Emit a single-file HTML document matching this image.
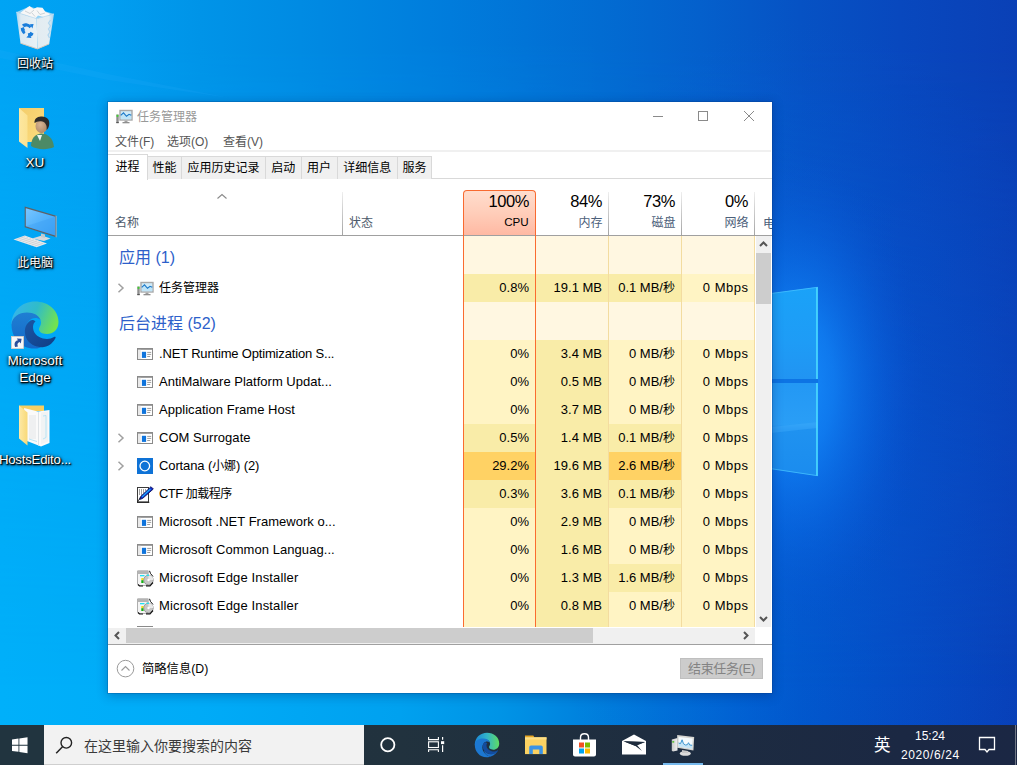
<!DOCTYPE html><html lang="zh-CN"><head><meta charset="utf-8"><title>任务管理器</title><style>
*{margin:0;padding:0;box-sizing:border-box}
html,body{width:1017px;height:765px;overflow:hidden}
body{position:relative;font-family:"Liberation Sans","Noto Sans CJK SC",sans-serif;font-size:12px;color:#000;background:#0a5fd0}
.abs,.abs *{position:absolute}
#desk{position:absolute;left:0;top:0;width:1017px;height:765px;overflow:hidden;
 background:
  linear-gradient(77deg,#00aef8 0px,#00aaf6 90px,#04a0f0 180px,#019cec 400px,#0088e2 520px,#0070d4 650px,#0454c8 800px,#0648c0 950px,#0840b8 1163px);
}
.t{position:absolute;white-space:nowrap;line-height:1}
.ico{position:absolute}
.dl{position:absolute;color:#fff;font-size:12px;text-align:center;white-space:nowrap;line-height:17px;
 text-shadow:1px 1px 1px rgba(0,0,0,.95),1px 1px 2px rgba(0,0,0,.9),0 1px 3px rgba(0,0,0,.8),0 0 4px rgba(0,0,0,.6)}
#win{position:absolute;left:108px;top:102px;width:664px;height:591px;background:#fff;
 box-shadow:0 0 0 1px rgba(0,50,120,.22),0 2px 10px 1px rgba(0,30,90,.30)}
#win .t{color:#000}
.tab{position:absolute;top:54px;height:23px;background:#f0f0f0;border:1px solid #d9d9d9;border-bottom:none;font-size:12px;text-align:center;line-height:22px;white-space:nowrap}
.cell{position:absolute;height:28px}
.num{position:absolute;font-size:13px;line-height:28px;height:28px;text-align:right;white-space:nowrap;color:#000}
.name{position:absolute;left:51px;font-size:13px;line-height:28px;height:28px;white-space:nowrap;color:#000}
.cj{font-size:12px}
.grp{position:absolute;left:11px;font-size:16px;color:#2d5fca;white-space:nowrap;line-height:38px;height:38px}
#tb{position:absolute;left:0;top:725px;width:1017px;height:40px;background:linear-gradient(90deg,#22343f 0px,#21323e 400px,#1e2d40 650px,#1b2843 900px,#1b2744 1017px)}
</style></head><body>
<div id="desk">

<svg class="ico" style="left:0;top:0" width="1017" height="765" viewBox="0 0 1017 765">
 <defs>
  <linearGradient id="gA" x1="0" y1="0" x2="1017" y2="0" gradientUnits="userSpaceOnUse"><stop offset="0.0000" stop-color="#00a4f4"/><stop offset="0.0983" stop-color="#019ff1"/><stop offset="0.1967" stop-color="#0094e8"/><stop offset="0.2950" stop-color="#008be3"/><stop offset="0.4425" stop-color="#007cdc"/><stop offset="0.5900" stop-color="#026cd2"/><stop offset="0.6883" stop-color="#0460cc"/><stop offset="0.7866" stop-color="#0652c4"/><stop offset="0.8850" stop-color="#0848be"/><stop offset="1.0000" stop-color="#0a40b6"/></linearGradient>
  <linearGradient id="gB" x1="0" y1="0" x2="1017" y2="0" gradientUnits="userSpaceOnUse"><stop offset="0.0000" stop-color="#00b0fa"/><stop offset="0.1967" stop-color="#00abf7"/><stop offset="0.3933" stop-color="#00a1ef"/><stop offset="0.4916" stop-color="#0094e6"/><stop offset="0.5900" stop-color="#007edc"/><stop offset="0.6883" stop-color="#0069d4"/><stop offset="0.7375" stop-color="#005fd0"/><stop offset="0.7866" stop-color="#0056ca"/><stop offset="0.8850" stop-color="#044ac2"/><stop offset="1.0000" stop-color="#0840b8"/></linearGradient>
  <linearGradient id="gM" x1="0" y1="0" x2="0" y2="765" gradientUnits="userSpaceOnUse"><stop offset="0" stop-color="#fff"/><stop offset=".06" stop-color="#fff"/><stop offset=".9" stop-color="#000"/><stop offset="1" stop-color="#000"/></linearGradient>
  <mask id="mk" maskUnits="userSpaceOnUse" x="0" y="0" width="1017" height="765"><rect width="1017" height="765" fill="url(#gM)"/></mask>
  <radialGradient id="glow" cx="795" cy="385" r="1" gradientUnits="userSpaceOnUse" gradientTransform="translate(795 385) scale(130 240) translate(-795 -385)">
   <stop offset="0" stop-color="#1890ff" stop-opacity=".95"/>
   <stop offset=".3" stop-color="#1284f8" stop-opacity=".75"/>
   <stop offset=".6" stop-color="#0c70ec" stop-opacity=".4"/>
   <stop offset="1" stop-color="#0850d0" stop-opacity="0"/>
  </radialGradient>
  <radialGradient id="glow2" cx="800" cy="440" r="1" gradientUnits="userSpaceOnUse" gradientTransform="translate(800 440) scale(300 420) translate(-800 -440)">
   <stop offset="0" stop-color="#0a64e2" stop-opacity=".35"/>
   <stop offset="1" stop-color="#0a64e2" stop-opacity="0"/>
  </radialGradient>
  <linearGradient id="p1" x1="0" y1="0" x2="0" y2="1">
   <stop offset="0" stop-color="#1aa2f8"/><stop offset=".6" stop-color="#1e9cf6"/><stop offset="1" stop-color="#2194f2"/>
  </linearGradient>
  <linearGradient id="p2" x1="0" y1="0" x2="0" y2="1">
   <stop offset="0" stop-color="#2398f4"/><stop offset=".45" stop-color="#2a9ef6"/><stop offset=".5" stop-color="#1f92f0"/><stop offset="1" stop-color="#1b8cee"/>
  </linearGradient>
 </defs>
 <rect width="1017" height="765" fill="url(#gB)"/>
 <rect width="1017" height="765" fill="url(#gA)" mask="url(#mk)"/>
 <rect x="400" y="0" width="617" height="765" fill="url(#glow2)"/>
 <rect x="600" y="0" width="417" height="765" fill="url(#glow)"/>
 <rect x="700" y="379" width="118" height="4" fill="#0d74e4"/>
 <path d="M700 303L817.500 287V379H700Z" fill="url(#p1)"/>
 <path d="M700 383H817.500V476L700 458Z" fill="url(#p2)"/>
 <path d="M700 435L817 422V428L700 441Z" fill="#3aa8fa" opacity=".5"/>
 <path d="M817 287V379M817 383V476" stroke="#4cdcff" stroke-width="1.600" fill="none"/>
 <path d="M700 303L817.500 287.300" stroke="#45c0ff" stroke-width="1" fill="none" opacity=".8"/>
 <path d="M700 458L817.500 475.700" stroke="#45c0ff" stroke-width="1" fill="none" opacity=".8"/>
 <path d="M0 50L108 74L230 98L108 80L0 58Z" fill="#38b4ff" opacity=".13"/>
</svg>


<!-- recycle bin -->
<svg class="ico" style="left:12px;top:3px" width="46" height="50" viewBox="0 0 46 50">
 <defs>
  <linearGradient id="rbL" x1="0" y1="0" x2="1" y2="0"><stop offset="0" stop-color="#a9d6f3"/><stop offset=".22" stop-color="#e6edf2"/><stop offset="1" stop-color="#f3f5f6"/></linearGradient>
  <linearGradient id="rbR" x1="0" y1="0" x2="1" y2="0"><stop offset="0" stop-color="#eceff1"/><stop offset=".7" stop-color="#eef1f3"/><stop offset="1" stop-color="#a6d3f1"/></linearGradient>
 </defs>
 <path d="M4.200 9.200L17.500 3.500L42 11L24.700 15.700Z" fill="#cfe6f7" opacity=".7"/>
 <path d="M7.500 10.500L12 7L17.500 3L21.500 6L25 4.300L30.500 4.800L33.500 9L38.500 11L33 14.500L26 12.500L23 16L15 12.500Z" fill="#f7f7f7"/>
 <path d="M13 8l5 2.500 4-3.500M25 7.500l3 4 5-1.500M20 10l3 3.500" stroke="#cdd3d8" stroke-width="1" fill="none"/>
 <path d="M4.200 9.200L24.700 15.700L25.400 45.900L8.500 40.200Z" fill="url(#rbL)" opacity=".96"/>
 <path d="M24.700 15.700L42 11L37.200 40.900L25.400 45.900Z" fill="url(#rbR)" opacity=".96"/>
 <path d="M38.500 17l-2 3 2 3-2 3 1.500 3-2 3 1.500 3" stroke="#a9d3ee" stroke-width="1.200" fill="none" opacity=".9"/>
 <path d="M4.200 9.200L24.700 15.700L42 11" stroke="#c2dcee" stroke-width=".9" fill="none"/>
 <path d="M8.500 40.200L25.400 45.900L37.200 40.900" stroke="#d8c9bd" stroke-width="1" fill="none"/>
 <g transform="translate(15.300 26.900) skewY(16)" fill="none" stroke="#1b7edb" stroke-width="3.200">
  <path d="M-4.100 -2.600A4.900 4.900 0 0 1 3.300 -3.600"/>
  <path d="M4.700 1.300A4.900 4.900 0 0 1 0.800 4.800"/>
  <path d="M-2.600 4.100A4.900 4.900 0 0 1 -4.900 -0.300"/>
 </g>
 <path d="M17.800 21.300l2.600 4.200 1.200-4.500zM19.500 35l-5.200-.5 3.200-3.300zM9 27.500l2.200-4.300 2 4.300z" fill="#1b7edb"/>
</svg>
<div class="dl" style="left:0;top:56px;width:70px;font-size:12px">回收站</div>

<!-- user folder -->
<svg class="ico" style="left:17px;top:106px" width="40" height="46" viewBox="0 0 40 46">
 <defs>
  <linearGradient id="uf1" x1="0" y1="0" x2="1" y2="1"><stop offset="0" stop-color="#f3cd6b"/><stop offset="1" stop-color="#fcdc7e"/></linearGradient>
  <linearGradient id="uf2" x1="0" y1="0" x2="1" y2="0"><stop offset="0" stop-color="#fde7a0"/><stop offset="1" stop-color="#fbe291"/></linearGradient>
  <radialGradient id="face" cx=".4" cy=".4" r=".7"><stop offset="0" stop-color="#d8b493"/><stop offset="1" stop-color="#a98565"/></radialGradient>
 </defs>
 <path d="M2 2H27V36H10Z" fill="url(#uf1)"/>
 <path d="M2 2L10.5 9.5V42L2 35.5Z" fill="url(#uf2)"/>
 <path d="M14 40C14 33 18 28 24 27.5C31 27.5 36 32 37 41C31 44 20 44 14 40Z" fill="#4c8a66"/>
 <path d="M20 29l3 6 2-6z" fill="#eef3f0"/>
 <ellipse cx="24.5" cy="20" rx="6" ry="7.2" fill="url(#face)"/>
 <path d="M17.5 17C17 11.5 22 10.5 25 10.5C30 10.5 33.5 14 32 20C31 23 29.5 24 29.5 24C30.5 19 28 15.5 24 15.2C21 15 19 16 17.5 17Z" fill="#2d2b2a"/>
</svg>
<div class="dl" style="left:0;top:154px;width:70px;font-size:13.5px">XU</div>

<!-- this pc -->
<svg class="ico" style="left:12px;top:205px" width="46" height="44" viewBox="0 0 46 44">
 <defs>
  <linearGradient id="pc1" x1="0" y1="0" x2="1" y2="1"><stop offset="0" stop-color="#7ac6ff"/><stop offset=".5" stop-color="#52b2fc"/><stop offset="1" stop-color="#3aa2f6"/></linearGradient>
 </defs>
 <path d="M20 33.500L30 30.500L38.500 33.500L32 36Z" fill="#d4d9dd"/>
 <path d="M29 28.500l4 1v3.500l-4-1z" fill="#c3c9ce"/>
 <path d="M12.700 1.500L44.300 10.800V32.300L12.700 22.300Z" fill="#5e6268"/><path d="M43.600 10.600L44.600 10.900V32.400L43.600 32.100Z" fill="#b4b8bc"/>
 <path d="M13.800 3.200L43.200 11.800V30.500L13.800 21.300Z" fill="url(#pc1)"/>
 <path d="M13.800 21.300L43.200 11.800V30.500Z" fill="#3a9cf2" opacity=".35"/>
 <path d="M1.500 34.400L12.800 30.500L35 38.400L24.600 42.300Z" fill="#e6e8ea"/>
 <path d="M4.500 34.600l8.500-3M7.500 35.700l8.500-3M10.500 36.800l8.500-3M13.500 37.900l8.500-3M16.500 39l8.500-3M19.500 40.100l8.500-3M22.500 41.200l8.500-3" stroke="#c4c8cc" stroke-width=".7" fill="none"/>
</svg>
<div class="dl" style="left:0;top:254.500px;width:70px;font-size:12px">此电脑</div>

<!-- edge -->
<svg class="ico" style="left:10px;top:300px" width="50" height="50" viewBox="0 0 50 50">
 <defs>
  <linearGradient id="e1" x1="0" y1="0.2" x2="1" y2="0.5"><stop offset="0" stop-color="#36b4ee"/><stop offset=".5" stop-color="#30bcc8"/><stop offset="1" stop-color="#72e250"/></linearGradient>
  <linearGradient id="e2" x1="0" y1="0" x2="0" y2="1"><stop offset="0" stop-color="#1f7fd3"/><stop offset="1" stop-color="#1468c8"/></linearGradient>
  <linearGradient id="e3" x1="0" y1="0" x2="1" y2="1"><stop offset="0" stop-color="#1a56a6"/><stop offset="1" stop-color="#103e86"/></linearGradient>
 </defs>
 <path d="M1.500 24.500C1.500 11 12 1.500 25 1.500C38 1.500 48.500 10 48.500 22C48.500 30 43 34 37 34C31 34 28.500 31 29 28.500C30 26 31 25 31 22.500C31 18 27 14.500 21.500 14.500C12 14.500 5 20 1.500 24.500Z" fill="url(#e1)"/>
 <path d="M1.500 24.500C2 17 9 12.500 17 12.500C24 12.500 29 15.500 30.500 20C27 17 22 17.500 19 21C15 25.500 15 33 19 39C22 43.500 27 46.500 31 47.500C28 48.500 26 48.500 24 48.500C11 48.500 1.500 38 1.500 24.500Z" fill="url(#e2)"/>
 <path d="M20.500 20.500C15 24 13.500 31 16 37.500C19 44.500 27 48 34 47C40 46 44 41.500 45.500 38C46 37 45 36.300 44 37C41 39 37 39.500 33 38.500C27 37 23 32.500 23 27C23 24 24.500 22 25.500 21.500C23.500 19.500 21.500 19.800 20.500 20.500Z" fill="url(#e3)"/>
 <rect x="1.500" y="36.500" width="12" height="12" fill="#f7f7f7" stroke="#d9cfc8" stroke-width=".8"/>
 <path d="M5.200 47C3.800 43.500 5 40.800 8 40.300L6.800 38.600L11.600 38.700L10.800 43.400L9.600 42C7.600 42.500 6.800 44.500 8 46.500Z" fill="#2a4f9c"/>
</svg>
<div class="dl" style="left:0;top:352px;width:70px;font-size:13.5px">Microsoft<br>Edge</div>

<!-- hosts editor folder -->
<svg class="ico" style="left:17px;top:403px" width="36" height="46" viewBox="0 0 36 46">
 <defs>
  <linearGradient id="hf2" x1="0" y1="0" x2="1" y2="0"><stop offset="0" stop-color="#fde9a6"/><stop offset="1" stop-color="#f8d978"/></linearGradient>
 </defs>
 <path d="M2 2.500H27V8H2Z" fill="#f6cf62"/>
 <path d="M7 5L21 8.500L32.500 7V40L24 43.500L10 38Z" fill="#fafafa"/>
 <path d="M21.500 9V42.500" stroke="#dfe3e6" stroke-width="1"/>
 <path d="M24 9.500L31 8.500V38.500L24 41.500Z" fill="#f1f3f4"/>
 <path d="M12 12h7v24h-7z" fill="#eceeef" opacity=".8"/>
 <path d="M26 13l3-.5v22l-3 1.500" stroke="#a9dff5" stroke-width=".8" fill="none"/>
 <path d="M12 36l8 2.500" stroke="#a9dff5" stroke-width=".8" fill="none"/>
 <path d="M2 2.500L10.500 9.500V42.500L2 35.500Z" fill="url(#hf2)"/>
</svg>
<div class="dl" style="left:-20px;top:451px;width:110px;font-size:13.2px;letter-spacing:-.2px">HostsEdito...</div>

</div>
<div id="win">

<svg class="ico" style="left:8px;top:5.8px" width="17" height="16" viewBox="0 0 17 16">
 <rect x="0.300" y="6.500" width="2.400" height="8.500" fill="#8e8e8e"/><rect x="0.600" y="6.800" width="1.800" height="2" fill="#3fd22e"/><rect x="0.300" y="14" width="2.400" height="1.200" fill="#555"/>
 <rect x="4" y="2.500" width="12" height="9.500" fill="#cfeaf8" stroke="#a8a8a8" stroke-width="1.400"/>
 <path d="M4.700 9.500V7.500L7.500 4.800L10.500 8.300L13 6.300L15.300 7.500V11.300H4.700Z" fill="#bfe4f7"/>
 <polyline points="4.700,7.300 7.500,4.800 10.500,8.300 13,6.300 15.300,7.300" fill="none" stroke="#1b79c9" stroke-width="1.100"/>
 <rect x="8.500" y="12.700" width="3" height="1.500" fill="#a0a0a0"/><rect x="6.500" y="14" width="7" height="1.300" fill="#8f8f8f"/>
</svg>
<div class="t" style="left:29px;top:9px;font-size:12px;color:#999">任务管理器</div>
<svg class="ico" style="left:540px;top:4px" width="120" height="22" viewBox="0 0 120 22">
 <path d="M5 10.5h10" stroke="#8a8a8a" stroke-width="1" fill="none"/>
 <rect x="50.5" y="5.5" width="9" height="9" stroke="#8a8a8a" stroke-width="1" fill="none"/>
 <path d="M96 5l10 10M106 5l-10 10" stroke="#8a8a8a" stroke-width="1" fill="none"/>
</svg>

<div class="t" style="left:7px;top:34px;font-size:12px;color:#555">文件(F)</div>
<div class="t" style="left:59px;top:34px;font-size:12px;color:#555">选项(O)</div>
<div class="t" style="left:115px;top:34px;font-size:12px;color:#555">查看(V)</div>
<div style="position:absolute;left:0;top:48px;width:663px;height:2px;background:#f0f0f0"></div>
<div style="position:absolute;left:0;top:76px;width:664px;height:1px;background:#d9d9d9"></div>
<div class="tab" style="left:39px;width:35px">性能</div>
<div class="tab" style="left:73px;width:85px">应用历史记录</div>
<div class="tab" style="left:157px;width:36.5px">启动</div>
<div class="tab" style="left:192.5px;width:37.0px">用户</div>
<div class="tab" style="left:228.5px;width:61.5px">详细信息</div>
<div class="tab" style="left:289px;width:35px">服务</div>
<div class="tab" style="left:0;top:52px;width:40px;height:26px;background:#fff;line-height:24px;border-left:none">进程</div>
<div style="position:absolute;left:234px;top:90px;width:1px;height:43px;background:linear-gradient(#efefef,#d0d0d0 40%,#a4a4a4)"></div>
<div style="position:absolute;left:500px;top:90px;width:1px;height:43px;background:linear-gradient(#efefef,#d0d0d0 40%,#a4a4a4)"></div>
<div style="position:absolute;left:573px;top:90px;width:1px;height:43px;background:linear-gradient(#efefef,#d0d0d0 40%,#a4a4a4)"></div>
<div style="position:absolute;left:646px;top:90px;width:1px;height:43px;background:linear-gradient(#efefef,#d0d0d0 40%,#a4a4a4)"></div>
<div style="position:absolute;left:355px;top:88px;width:73px;height:46px;border:1px solid #f86a30;border-bottom:none;border-radius:4px 4px 0 0;background:linear-gradient(180deg,#ffddcd 0%,#ffcdb9 50%,#ffb8a2 100%)"></div>
<div style="position:absolute;left:0;top:133px;width:664px;height:1px;background:#a0a0a0"></div>
<div style="position:absolute;left:355px;top:133px;width:1px;height:1px;background:#fa6c30"></div><div style="position:absolute;left:427px;top:133px;width:1px;height:1px;background:#fa6c30"></div>
<svg class="ico" style="left:108px;top:91px" width="12" height="7" viewBox="0 0 12 7"><path d="M1.5 5.5L6 1.5L10.5 5.5" fill="none" stroke="#8a8a8a" stroke-width="1.1"/></svg>
<div class="t" style="left:7px;top:115px;font-size:12px;color:#4c5a6b">名称</div>
<div class="t" style="left:241px;top:115px;font-size:12px;color:#4c5a6b">状态</div>
<div class="t" style="right:243px;top:91px;font-size:16.5px;letter-spacing:-0.4px;color:#000">100%</div>
<div class="t" style="right:243.3px;top:114.4px;font-size:11.6px;color:#000">CPU</div>
<div class="t" style="right:170px;top:91px;font-size:16.5px;letter-spacing:-0.4px;color:#000">84%</div>
<div class="t" style="right:169.5px;top:115px;font-size:12px;color:#4c607a">内存</div>
<div class="t" style="right:97px;top:91px;font-size:16.5px;letter-spacing:-0.4px;color:#000">73%</div>
<div class="t" style="right:96.5px;top:115px;font-size:12px;color:#4c607a">磁盘</div>
<div class="t" style="right:24px;top:91px;font-size:16.5px;letter-spacing:-0.4px;color:#000">0%</div>
<div class="t" style="right:23.5px;top:115px;font-size:12px;color:#4c607a">网络</div>
<div style="position:absolute;left:655px;top:110px;width:9px;height:20px;overflow:hidden"><div class="t" style="left:0;top:5.5px;font-size:12px;color:#4c607a">电</div></div>
<div style="position:absolute;left:0;top:134px;width:647px;height:391px;overflow:hidden"><div style="position:absolute;left:0;top:-134px;width:664px;height:600px">
<div style="position:absolute;left:355px;top:134px;width:292px;height:38px;background:#fff7e1"></div>
<div class="grp" style="top:137px">应用 (1)</div>
<div class="cell" style="left:355px;top:172px;width:73px;background:#f9eca8"></div>
<div class="num" style="right:243px;top:172px">0.8%</div>
<div class="cell" style="left:428px;top:172px;width:73px;background:#f9eca8"></div>
<div class="num" style="right:170px;top:172px">19.1 MB</div>
<div class="cell" style="left:501px;top:172px;width:73px;background:#f9eca8"></div>
<div class="num" style="right:97px;top:172px">0.1 MB/<span class="cj">秒</span></div>
<div class="cell" style="left:574px;top:172px;width:73px;background:#fff4c4"></div>
<div class="num" style="right:24px;top:172px;letter-spacing:.5px;margin-right:-.5px">0 Mbps</div>
<svg class="ico" style="left:9px;top:181px" width="8" height="10" viewBox="0 0 8 10"><path d="M1.5 0.8L6 5L1.5 9.2" fill="none" stroke="#a0a0a0" stroke-width="1.5"/></svg>
<svg class="ico" style="left:29px;top:178px" width="17" height="16" viewBox="0 0 17 16">
 <rect x="0.300" y="6.500" width="2.400" height="8.500" fill="#8e8e8e"/><rect x="0.600" y="6.800" width="1.800" height="2" fill="#3fd22e"/><rect x="0.300" y="14" width="2.400" height="1.200" fill="#555"/>
 <rect x="4" y="2.500" width="12" height="9.500" fill="#cfeaf8" stroke="#a8a8a8" stroke-width="1.400"/>
 <path d="M4.700 9.500V7.500L7.500 4.800L10.500 8.300L13 6.300L15.300 7.500V11.300H4.700Z" fill="#bfe4f7"/>
 <polyline points="4.700,7.300 7.500,4.800 10.500,8.300 13,6.300 15.300,7.300" fill="none" stroke="#1b79c9" stroke-width="1.100"/>
 <rect x="8.500" y="12.700" width="3" height="1.500" fill="#a0a0a0"/><rect x="6.500" y="14" width="7" height="1.300" fill="#8f8f8f"/>
</svg>

<div class="name" style="top:172px;letter-spacing:-0.00px"><span class="cj">任务管理器</span></div>
<div style="position:absolute;left:355px;top:200px;width:292px;height:38px;background:#fff7e1"></div>
<div class="grp" style="top:203px">后台进程 (52)</div>
<div class="cell" style="left:355px;top:238px;width:73px;background:#fff4c4"></div>
<div class="num" style="right:243px;top:238px">0%</div>
<div class="cell" style="left:428px;top:238px;width:73px;background:#f9eca8"></div>
<div class="num" style="right:170px;top:238px">3.4 MB</div>
<div class="cell" style="left:501px;top:238px;width:73px;background:#fff4c4"></div>
<div class="num" style="right:97px;top:238px">0 MB/<span class="cj">秒</span></div>
<div class="cell" style="left:574px;top:238px;width:73px;background:#fff4c4"></div>
<div class="num" style="right:24px;top:238px;letter-spacing:.5px;margin-right:-.5px">0 Mbps</div>
<svg class="ico" style="left:29px;top:244px" width="16" height="16" viewBox="0 0 16 16"><rect x="0.500" y="2.500" width="15" height="11" fill="#fff" stroke="#8a8a8a"/><rect x="0" y="2" width="16" height="1.800" fill="#8a8a8a"/><rect x="1" y="3.800" width="2.700" height="9.200" fill="#e9e9e9"/><rect x="4.900" y="5.800" width="4.200" height="6.100" fill="#0f74dc"/><path d="M10.200 6.400h4M10.200 8.400h4M10.200 10.500h3" stroke="#9c9c9c" stroke-width="1"/></svg>
<div class="name" style="top:238px;letter-spacing:-0.17px">.NET Runtime Optimization S...</div>
<div class="cell" style="left:355px;top:266px;width:73px;background:#fff4c4"></div>
<div class="num" style="right:243px;top:266px">0%</div>
<div class="cell" style="left:428px;top:266px;width:73px;background:#f9eca8"></div>
<div class="num" style="right:170px;top:266px">0.5 MB</div>
<div class="cell" style="left:501px;top:266px;width:73px;background:#fff4c4"></div>
<div class="num" style="right:97px;top:266px">0 MB/<span class="cj">秒</span></div>
<div class="cell" style="left:574px;top:266px;width:73px;background:#fff4c4"></div>
<div class="num" style="right:24px;top:266px;letter-spacing:.5px;margin-right:-.5px">0 Mbps</div>
<svg class="ico" style="left:29px;top:272px" width="16" height="16" viewBox="0 0 16 16"><rect x="0.500" y="2.500" width="15" height="11" fill="#fff" stroke="#8a8a8a"/><rect x="0" y="2" width="16" height="1.800" fill="#8a8a8a"/><rect x="1" y="3.800" width="2.700" height="9.200" fill="#e9e9e9"/><rect x="4.900" y="5.800" width="4.200" height="6.100" fill="#0f74dc"/><path d="M10.200 6.400h4M10.200 8.400h4M10.200 10.500h3" stroke="#9c9c9c" stroke-width="1"/></svg>
<div class="name" style="top:266px;letter-spacing:0.01px">AntiMalware Platform Updat...</div>
<div class="cell" style="left:355px;top:294px;width:73px;background:#fff4c4"></div>
<div class="num" style="right:243px;top:294px">0%</div>
<div class="cell" style="left:428px;top:294px;width:73px;background:#f9eca8"></div>
<div class="num" style="right:170px;top:294px">3.7 MB</div>
<div class="cell" style="left:501px;top:294px;width:73px;background:#fff4c4"></div>
<div class="num" style="right:97px;top:294px">0 MB/<span class="cj">秒</span></div>
<div class="cell" style="left:574px;top:294px;width:73px;background:#fff4c4"></div>
<div class="num" style="right:24px;top:294px;letter-spacing:.5px;margin-right:-.5px">0 Mbps</div>
<svg class="ico" style="left:29px;top:300px" width="16" height="16" viewBox="0 0 16 16"><rect x="0.500" y="2.500" width="15" height="11" fill="#fff" stroke="#8a8a8a"/><rect x="0" y="2" width="16" height="1.800" fill="#8a8a8a"/><rect x="1" y="3.800" width="2.700" height="9.200" fill="#e9e9e9"/><rect x="4.900" y="5.800" width="4.200" height="6.100" fill="#0f74dc"/><path d="M10.200 6.400h4M10.200 8.400h4M10.200 10.500h3" stroke="#9c9c9c" stroke-width="1"/></svg>
<div class="name" style="top:294px;letter-spacing:0.04px">Application Frame Host</div>
<div class="cell" style="left:355px;top:322px;width:73px;background:#f9eca8"></div>
<div class="num" style="right:243px;top:322px">0.5%</div>
<div class="cell" style="left:428px;top:322px;width:73px;background:#f9eca8"></div>
<div class="num" style="right:170px;top:322px">1.4 MB</div>
<div class="cell" style="left:501px;top:322px;width:73px;background:#f9eca8"></div>
<div class="num" style="right:97px;top:322px">0.1 MB/<span class="cj">秒</span></div>
<div class="cell" style="left:574px;top:322px;width:73px;background:#fff4c4"></div>
<div class="num" style="right:24px;top:322px;letter-spacing:.5px;margin-right:-.5px">0 Mbps</div>
<svg class="ico" style="left:9px;top:331px" width="8" height="10" viewBox="0 0 8 10"><path d="M1.5 0.8L6 5L1.5 9.2" fill="none" stroke="#a0a0a0" stroke-width="1.5"/></svg>
<svg class="ico" style="left:29px;top:328px" width="16" height="16" viewBox="0 0 16 16"><rect x="0.500" y="2.500" width="15" height="11" fill="#fff" stroke="#8a8a8a"/><rect x="0" y="2" width="16" height="1.800" fill="#8a8a8a"/><rect x="1" y="3.800" width="2.700" height="9.200" fill="#e9e9e9"/><rect x="4.900" y="5.800" width="4.200" height="6.100" fill="#0f74dc"/><path d="M10.200 6.400h4M10.200 8.400h4M10.200 10.500h3" stroke="#9c9c9c" stroke-width="1"/></svg>
<div class="name" style="top:322px;letter-spacing:0.04px">COM Surrogate</div>
<div class="cell" style="left:355px;top:350px;width:73px;background:#ffd264"></div>
<div class="num" style="right:243px;top:350px">29.2%</div>
<div class="cell" style="left:428px;top:350px;width:73px;background:#f9eca8"></div>
<div class="num" style="right:170px;top:350px">19.6 MB</div>
<div class="cell" style="left:501px;top:350px;width:73px;background:#ffd264"></div>
<div class="num" style="right:97px;top:350px">2.6 MB/<span class="cj">秒</span></div>
<div class="cell" style="left:574px;top:350px;width:73px;background:#fff4c4"></div>
<div class="num" style="right:24px;top:350px;letter-spacing:.5px;margin-right:-.5px">0 Mbps</div>
<svg class="ico" style="left:9px;top:359px" width="8" height="10" viewBox="0 0 8 10"><path d="M1.5 0.8L6 5L1.5 9.2" fill="none" stroke="#a0a0a0" stroke-width="1.5"/></svg>
<svg class="ico" style="left:29px;top:356px" width="16" height="16" viewBox="0 0 16 16"><rect width="16" height="16" fill="#0e72d6"/><circle cx="7.800" cy="8" r="4.800" fill="none" stroke="#fff" stroke-width="1.300"/></svg>
<div class="name" style="top:350px;letter-spacing:-0.11px">Cortana (<span class="cj">小娜</span>) (2)</div>
<div class="cell" style="left:355px;top:378px;width:73px;background:#f9eca8"></div>
<div class="num" style="right:243px;top:378px">0.3%</div>
<div class="cell" style="left:428px;top:378px;width:73px;background:#f9eca8"></div>
<div class="num" style="right:170px;top:378px">3.6 MB</div>
<div class="cell" style="left:501px;top:378px;width:73px;background:#f9eca8"></div>
<div class="num" style="right:97px;top:378px">0.1 MB/<span class="cj">秒</span></div>
<div class="cell" style="left:574px;top:378px;width:73px;background:#fff4c4"></div>
<div class="num" style="right:24px;top:378px;letter-spacing:.5px;margin-right:-.5px">0 Mbps</div>
<svg class="ico" style="left:29px;top:384px" width="17" height="17" viewBox="0 0 17 17"><rect x="0.500" y="1.500" width="11" height="14.500" fill="#fff" stroke="#3a3a3a"/><path d="M0 16.300H12.300" stroke="#111" stroke-width="1"/><path d="M2 4h7M2 6h6M2 8h4" stroke="#444" stroke-width="1" stroke-dasharray="1 1"/><path d="M14 0.700L16.300 3L5.500 12.500L2.500 13.500L3.700 10.500Z" fill="#1328c8" stroke="#0a1260" stroke-width="0.900"/><path d="M13.500 3L5 10.800" stroke="#19b8ff" stroke-width="1.100"/><path d="M0.500 16L3.700 11" stroke="#222" stroke-width=".8"/></svg>
<div class="name" style="top:378px;letter-spacing:-0.53px">CTF <span class="cj">加载程序</span></div>
<div class="cell" style="left:355px;top:406px;width:73px;background:#fff4c4"></div>
<div class="num" style="right:243px;top:406px">0%</div>
<div class="cell" style="left:428px;top:406px;width:73px;background:#f9eca8"></div>
<div class="num" style="right:170px;top:406px">2.9 MB</div>
<div class="cell" style="left:501px;top:406px;width:73px;background:#fff4c4"></div>
<div class="num" style="right:97px;top:406px">0 MB/<span class="cj">秒</span></div>
<div class="cell" style="left:574px;top:406px;width:73px;background:#fff4c4"></div>
<div class="num" style="right:24px;top:406px;letter-spacing:.5px;margin-right:-.5px">0 Mbps</div>
<svg class="ico" style="left:29px;top:412px" width="16" height="16" viewBox="0 0 16 16"><rect x="0.500" y="2.500" width="15" height="11" fill="#fff" stroke="#8a8a8a"/><rect x="0" y="2" width="16" height="1.800" fill="#8a8a8a"/><rect x="1" y="3.800" width="2.700" height="9.200" fill="#e9e9e9"/><rect x="4.900" y="5.800" width="4.200" height="6.100" fill="#0f74dc"/><path d="M10.200 6.400h4M10.200 8.400h4M10.200 10.500h3" stroke="#9c9c9c" stroke-width="1"/></svg>
<div class="name" style="top:406px;letter-spacing:0.02px">Microsoft .NET Framework o...</div>
<div class="cell" style="left:355px;top:434px;width:73px;background:#fff4c4"></div>
<div class="num" style="right:243px;top:434px">0%</div>
<div class="cell" style="left:428px;top:434px;width:73px;background:#f9eca8"></div>
<div class="num" style="right:170px;top:434px">1.6 MB</div>
<div class="cell" style="left:501px;top:434px;width:73px;background:#fff4c4"></div>
<div class="num" style="right:97px;top:434px">0 MB/<span class="cj">秒</span></div>
<div class="cell" style="left:574px;top:434px;width:73px;background:#fff4c4"></div>
<div class="num" style="right:24px;top:434px;letter-spacing:.5px;margin-right:-.5px">0 Mbps</div>
<svg class="ico" style="left:29px;top:440px" width="16" height="16" viewBox="0 0 16 16"><rect x="0.500" y="2.500" width="15" height="11" fill="#fff" stroke="#8a8a8a"/><rect x="0" y="2" width="16" height="1.800" fill="#8a8a8a"/><rect x="1" y="3.800" width="2.700" height="9.200" fill="#e9e9e9"/><rect x="4.900" y="5.800" width="4.200" height="6.100" fill="#0f74dc"/><path d="M10.200 6.400h4M10.200 8.400h4M10.200 10.500h3" stroke="#9c9c9c" stroke-width="1"/></svg>
<div class="name" style="top:434px;letter-spacing:0.06px">Microsoft Common Languag...</div>
<div class="cell" style="left:355px;top:462px;width:73px;background:#fff4c4"></div>
<div class="num" style="right:243px;top:462px">0%</div>
<div class="cell" style="left:428px;top:462px;width:73px;background:#f9eca8"></div>
<div class="num" style="right:170px;top:462px">1.3 MB</div>
<div class="cell" style="left:501px;top:462px;width:73px;background:#f9eca8"></div>
<div class="num" style="right:97px;top:462px">1.6 MB/<span class="cj">秒</span></div>
<div class="cell" style="left:574px;top:462px;width:73px;background:#fff4c4"></div>
<div class="num" style="right:24px;top:462px;letter-spacing:.5px;margin-right:-.5px">0 Mbps</div>
<svg class="ico" style="left:29px;top:468px" width="17" height="17" viewBox="0 0 17 17"><path d="M0.500 1H11V14.500L8 15.500H2L0.500 14Z" fill="#f4f4f4" stroke="#9a9a9a" stroke-width=".8"/><rect x="0.500" y="0.500" width="11" height="3.500" fill="#b4b4b4"/><rect x="3" y="5" width="4.500" height="1.300" fill="#22e0f0"/><rect x="4.300" y="8" width="2.300" height="2.200" fill="#f4e018"/><rect x="4.300" y="10.200" width="2.300" height="2.800" fill="#12b012"/><circle cx="11.500" cy="10" r="4.800" fill="#c6c6c6" stroke="#777" stroke-width=".6"/><path d="M11.500 5.200A4.800 4.800 0 0 1 16.300 10H11.500Z" fill="#e9e9e9"/><rect x="9.500" y="4.600" width="2.500" height="1.300" fill="#22e0f0"/><circle cx="11.500" cy="10" r="1.200" fill="#fff"/><path d="M1 14.500L2.500 16H6M9 15.800H13L16 12.500" stroke="#111" stroke-width="1.200" fill="none"/><path d="M12.500 0.800L13.500 3.500L16 6.500" stroke="#111" stroke-width="1" fill="none"/></svg>
<div class="name" style="top:462px;letter-spacing:0.15px">Microsoft Edge Installer</div>
<div class="cell" style="left:355px;top:490px;width:73px;background:#fff4c4"></div>
<div class="num" style="right:243px;top:490px">0%</div>
<div class="cell" style="left:428px;top:490px;width:73px;background:#f9eca8"></div>
<div class="num" style="right:170px;top:490px">0.8 MB</div>
<div class="cell" style="left:501px;top:490px;width:73px;background:#fff4c4"></div>
<div class="num" style="right:97px;top:490px">0 MB/<span class="cj">秒</span></div>
<div class="cell" style="left:574px;top:490px;width:73px;background:#fff4c4"></div>
<div class="num" style="right:24px;top:490px;letter-spacing:.5px;margin-right:-.5px">0 Mbps</div>
<svg class="ico" style="left:29px;top:496px" width="17" height="17" viewBox="0 0 17 17"><path d="M0.500 1H11V14.500L8 15.500H2L0.500 14Z" fill="#f4f4f4" stroke="#9a9a9a" stroke-width=".8"/><rect x="0.500" y="0.500" width="11" height="3.500" fill="#b4b4b4"/><rect x="3" y="5" width="4.500" height="1.300" fill="#22e0f0"/><rect x="4.300" y="8" width="2.300" height="2.200" fill="#f4e018"/><rect x="4.300" y="10.200" width="2.300" height="2.800" fill="#12b012"/><circle cx="11.500" cy="10" r="4.800" fill="#c6c6c6" stroke="#777" stroke-width=".6"/><path d="M11.500 5.200A4.800 4.800 0 0 1 16.300 10H11.500Z" fill="#e9e9e9"/><rect x="9.500" y="4.600" width="2.500" height="1.300" fill="#22e0f0"/><circle cx="11.500" cy="10" r="1.200" fill="#fff"/><path d="M1 14.500L2.500 16H6M9 15.800H13L16 12.500" stroke="#111" stroke-width="1.200" fill="none"/><path d="M12.500 0.800L13.500 3.500L16 6.500" stroke="#111" stroke-width="1" fill="none"/></svg>
<div class="name" style="top:490px;letter-spacing:0.15px">Microsoft Edge Installer</div>
<div class="cell" style="left:355px;top:518px;width:292px;background:#fff4c4"></div>
<div class="cell" style="left:428px;top:518px;width:73px;background:#f9eca8"></div>
<svg class="ico" style="left:29px;top:521.5px" width="16" height="16" viewBox="0 0 16 16"><rect x="0.500" y="2.500" width="15" height="11" fill="#fff" stroke="#8a8a8a"/><rect x="0" y="2" width="16" height="1.800" fill="#8a8a8a"/><rect x="1" y="3.800" width="2.700" height="9.200" fill="#e9e9e9"/><rect x="4.900" y="5.800" width="4.200" height="6.100" fill="#0f74dc"/><path d="M10.200 6.400h4M10.200 8.400h4M10.200 10.500h3" stroke="#9c9c9c" stroke-width="1"/></svg>
<div style="position:absolute;left:500px;top:134px;width:1px;height:400px;background:#f3dca0"></div>
<div style="position:absolute;left:573px;top:134px;width:1px;height:400px;background:#f3dca0"></div>
<div style="position:absolute;left:646px;top:134px;width:1px;height:400px;background:#f3dca0"></div>
<div style="position:absolute;left:355px;top:134px;width:1px;height:400px;background:#fa6c30"></div>
<div style="position:absolute;left:427px;top:134px;width:1px;height:400px;background:#fa6c30"></div>
</div></div>
<div style="position:absolute;left:648px;top:134px;width:15px;height:391px;background:#f0f0f0"></div>
<div style="position:absolute;left:648px;top:151px;width:15px;height:50.5px;background:#cdcdcd"></div>
<svg class="ico" style="left:651px;top:139px" width="9" height="6" viewBox="0 0 9 6"><path d="M1 5L4.5 1.5L8 5" fill="none" stroke="#555" stroke-width="2"/></svg>
<svg class="ico" style="left:651px;top:514px" width="9" height="6" viewBox="0 0 9 6"><path d="M1 1L4.5 4.5L8 1" fill="none" stroke="#555" stroke-width="2"/></svg>
<div style="position:absolute;left:0;top:526px;width:647px;height:16px;background:#f0f0f0"></div>
<div style="position:absolute;left:18px;top:526px;width:467px;height:15px;background:#cdcdcd"></div>
<svg class="ico" style="left:6px;top:529px" width="6" height="9" viewBox="0 0 6 9"><path d="M5 1L1.5 4.5L5 8" fill="none" stroke="#555" stroke-width="2"/></svg>
<svg class="ico" style="left:635px;top:529px" width="6" height="9" viewBox="0 0 6 9"><path d="M1 1L4.5 4.5L1 8" fill="none" stroke="#555" stroke-width="2"/></svg>
<div style="position:absolute;left:0;top:542px;width:664px;height:1px;background:#a0a0a0"></div>

<svg class="ico" style="left:8px;top:557px" width="20" height="20" viewBox="0 0 20 20"><circle cx="9.5" cy="9.6" r="8.3" fill="#fff" stroke="#9a9a9a" stroke-width="1"/><path d="M5.5 11.5L9.5 7.5L13.5 11.5" fill="none" stroke="#9a9a9a" stroke-width="1.1"/></svg>
<div class="t" style="left:34px;top:560.5px;font-size:12.3px;color:#000">简略信息(D)</div>
<div style="position:absolute;left:572px;top:556px;width:83px;height:21px;background:#cccccc;border:1px solid #bfbfbf"></div>
<div class="t" style="left:580px;top:559.5px;font-size:13px;color:#838383;letter-spacing:-.35px">结束任务(E)</div>

</div>

<div id="tb">
<div style="position:absolute;left:0;top:0;width:44px;height:40px;background:#21343f"></div>
<svg class="ico" style="left:12px;top:12px" width="16" height="16.500" viewBox="0 0 17 17"><path d="M0 2.4L6.9 1.4V8H0zM7.8 1.3L16.5 0V8H7.8zM0 8.9H6.9V15.5L0 14.5zM7.8 8.9H16.5V17L7.8 15.7z" fill="#fff"/></svg>
<div style="position:absolute;left:44px;top:0;width:320px;height:40px;background:#f2f2f2;border-bottom:1px solid #cfcfcf"></div>
<svg class="ico" style="left:55px;top:11px" width="19" height="19" viewBox="0 0 19 19"><circle cx="11.3" cy="6.8" r="5.3" fill="none" stroke="#222" stroke-width="1.4"/><path d="M7.5 10.8L1.2 17.3" stroke="#222" stroke-width="1.5"/></svg>
<div class="t" style="left:84px;top:13.5px;font-size:14px;color:#3a3a3a">在这里输入你要搜索的内容</div>

<svg class="ico" style="left:377px;top:9px" width="22" height="22" viewBox="0 0 22 22"><circle cx="10.800" cy="10.800" r="6.600" fill="none" stroke="#fff" stroke-width="1.800"/></svg>
<svg class="ico" style="left:426px;top:11px" width="20" height="18" viewBox="0 0 20 18">
 <path d="M2.600 1.100V3.600H12.400V1.100M2.600 16.100V13.700H12.400V16.100" stroke="#fff" stroke-width="1.100" fill="none"/>
 <rect x="2.600" y="5.800" width="9.800" height="5.700" fill="none" stroke="#fff" stroke-width="1.100"/>
 <path d="M16.600 1.100V3.800M16.600 9.200V16.100" stroke="#fff" stroke-width="1.200"/>
 <rect x="15" y="5.200" width="3.200" height="2.900" fill="#fff"/>
</svg>
<svg class="ico" style="left:474px;top:7px" width="26" height="26" viewBox="0 0 50 50">
 <defs>
  <linearGradient id="te1" x1="0" y1="0" x2="1" y2="0"><stop offset="0" stop-color="#1a86d8"/><stop offset=".5" stop-color="#32b4c8"/><stop offset="1" stop-color="#5fdc62"/></linearGradient>
 </defs>
 <path d="M1.500 24.500C1.500 11 12 1.500 25 1.500C38 1.500 48.500 10 48.500 22C48.500 30 43 34 37 34C31 34 28.500 31 29 28.500C30 26 31 25 31 22.500C31 18 27 14.500 21.500 14.500C12 14.500 5 20 1.500 24.500Z" fill="url(#te1)"/>
 <path d="M1.500 24.500C2 17 9 12.500 17 12.500C24 12.500 29 15.500 30.500 20C27 17 22 17.500 19 21C15 25.500 15 33 19 39C22 43.500 27 46.500 31 47.500C28 48.500 26 48.500 24 48.500C11 48.500 1.500 38 1.500 24.500Z" fill="#1c78d2"/>
 <path d="M19.500 20.500C16 24 16 30 19 35C23 41.500 31 44 37.500 42.500C42 41.500 45 38.500 46 36.500C46.500 35.500 45.500 34.800 44.500 35.500C42 37 38 38 34 37C28 35.500 24 31 24 26C24 23.500 25 22 25.500 21.500C23.500 19.500 21 19.500 19.500 20.500Z" fill="#134c9e"/>
 <path d="M31 47.500C36 46 41 43 44.500 37.500C42 40 38 42.800 33 43C27 43 22 40 19 35.500C20 41 25 46 31 47.500Z" fill="#1b6fcc"/>
</svg>
<svg class="ico" style="left:524px;top:10px" width="24" height="20" viewBox="0 0 24 20">
 <path d="M1 0.600H9.300L10.500 2.500H1Z" fill="#e8a623"/>
 <rect x="1" y="2.300" width="21.500" height="16.800" fill="#fbd262"/>
 <path d="M1 2.300H22.500V4.500H1Z" fill="#fddf86"/>
 <path d="M5.200 19.100V12.500C5.200 11.300 5.900 10.500 7 10.500H17C18.100 10.500 18.800 11.300 18.800 12.500V19.100H15.300V14.500H8.800V19.100Z" fill="#3a93e6"/>
</svg>
<svg class="ico" style="left:572px;top:7px" width="25" height="26" viewBox="0 0 25 26">
 <path d="M8.500 8V5.500C8.500 3.300 10.300 1.800 12.500 1.800C14.700 1.800 16.500 3.300 16.500 5.500V8" fill="none" stroke="#fff" stroke-width="1.400"/>
 <path d="M1 7.500H24V22.500C24 23.600 23.100 24.500 22 24.500H3C1.900 24.500 1 23.600 1 22.500Z" fill="#fff"/>
 <rect x="7" y="10.500" width="5" height="5" fill="#f25022"/><rect x="13" y="10.500" width="5" height="5" fill="#7fba00"/>
 <rect x="7" y="16.500" width="5" height="5" fill="#00a4ef"/><rect x="13" y="16.500" width="5" height="5" fill="#ffb900"/>
</svg>
<svg class="ico" style="left:621px;top:9px" width="26" height="22" viewBox="0 0 26 22">
 <path d="M1 7L13 0.500L25 7V20.500H1Z" fill="#fff"/>
 <path d="M2.500 7.300L24 8L16 11L21 17L14.500 12Z" fill="#1d2b3c"/>
 <path d="M2.500 7.300L24 8L14.500 12Z" fill="#1d2b3c"/>
</svg>
<svg class="ico" style="left:671px;top:8px" width="25" height="25" viewBox="0 0 25 25">
 <defs><linearGradient id="tw" x1="0" y1="0" x2="1" y2="0"><stop offset="0" stop-color="#c9c9c9"/><stop offset="1" stop-color="#efefef"/></linearGradient></defs>
 <path d="M0.800 6.500L6.500 5V17.500L2 18.600L0.800 17.800Z" fill="url(#tw)"/>
 <rect x="1.300" y="8" width="1.900" height="1.700" fill="#5fbf3a"/>
 <ellipse cx="14.300" cy="20.500" rx="5.500" ry="2.300" fill="#dcdcdc"/>
 <path d="M11 17L17 18V20H11Z" fill="#c9c9c9"/>
 <path d="M6.200 2.100L23.200 4.100L22.400 17.600L6.200 14.700Z" fill="#d6d6d2"/>
 <path d="M7.600 3.900L21.700 5.500L21 15.700L7.600 13.400Z" fill="#f4fafd"/>
 <path d="M7.600 10L9.500 10.600L11.100 6.800L12.500 10.800L14.500 12L16.300 11.700L17.500 9.700L18.700 12L21.200 12.300L21 15.700L7.600 13.400Z" fill="#c4e4f6"/>
 <path d="M7.600 10L9.500 10.600L11.100 6.800L12.500 10.800L14.500 12L16.300 11.700L17.500 9.700L18.700 12L21.200 12.300" fill="none" stroke="#3d95d0" stroke-width="1"/>
</svg>

<div class="t" style="left:874px;top:12px;font-size:16.500px;color:#fff">英</div>
<div class="t" style="left:915px;top:5px;font-size:12px;color:#fff">15:24</div>
<div class="t" style="left:901px;top:24px;font-size:12px;color:#fff;letter-spacing:0.6px">2020/6/24</div>
<svg class="ico" style="left:978px;top:11px" width="18" height="18" viewBox="0 0 18 18"><path d="M1.5 1.5H16.5V13.5H11L9 16L7 13.5H1.5Z" fill="none" stroke="#fff" stroke-width="1.3"/></svg>
<div style="position:absolute;left:1015px;top:0;width:1px;height:40px;background:#6f7785"></div>
<div style="position:absolute;left:663px;top:38px;width:40px;height:2px;background:#76b9ed"></div>
</div>

</body></html>
